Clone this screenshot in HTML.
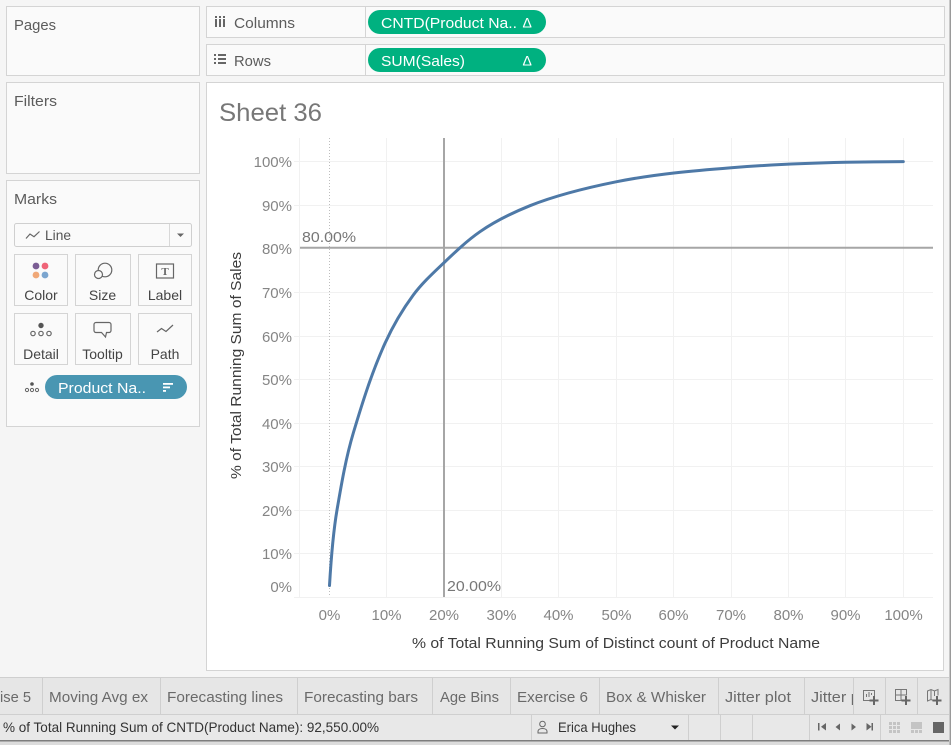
<!DOCTYPE html>
<html lang="en">
<head>
<meta charset="utf-8">
<title>Sheet 36</title>
<style>
html,body{margin:0;padding:0;background:#f5f5f5;width:951px;height:745px;overflow:hidden}
svg{display:block;position:absolute;left:0;top:0}
text{font-family:"Liberation Sans",sans-serif}
.p{fill:#fafafa;stroke:#d4d4d4;stroke-width:1}
.h{font-size:15px;fill:#5c5c5c}
.c{font-size:14px;fill:#444;text-anchor:middle}
.w{font-size:15px;fill:#fff}
.g{stroke:#f1f1f1;stroke-width:1;fill:none}
.y{font-size:15px;fill:#858585;text-anchor:end}
.x{font-size:15px;fill:#858585;text-anchor:middle}
.t{font-size:15px;fill:#6a6a6a}
.s{stroke:#cfcfcf;stroke-width:1}
.i{fill:none;stroke:#666;stroke-width:1.2}
</style>
</head>
<body>
<svg width="951" height="745" viewBox="0 0 951 745" xmlns="http://www.w3.org/2000/svg">
<defs><clipPath id="jc"><rect x="805" y="680" width="48" height="32"/></clipPath></defs>
<rect width="951" height="745" fill="#f5f5f5"/>

<!-- left panels -->
<rect class="p" x="6.5" y="6.5" width="193" height="69"/>
<text class="h" x="14" y="30" textLength="42" lengthAdjust="spacingAndGlyphs">Pages</text>
<rect class="p" x="6.5" y="82.5" width="193" height="91"/>
<text class="h" x="14" y="106" textLength="43" lengthAdjust="spacingAndGlyphs">Filters</text>
<rect class="p" x="6.5" y="180.5" width="193" height="246"/>
<text class="h" x="14" y="204" textLength="43" lengthAdjust="spacingAndGlyphs">Marks</text>

<!-- mark type dropdown -->
<rect x="14.5" y="223.5" width="177" height="23" rx="2" fill="#fafafa" stroke="#cfcfcf"/>
<line x1="169.5" y1="224" x2="169.5" y2="246" stroke="#d8d8d8"/>
<polyline class="i" points="26,238.500 30,234 34,236.700 39.500,231.500"/>
<text x="45" y="240" font-size="14" fill="#555" textLength="26" lengthAdjust="spacingAndGlyphs">Line</text>
<path d="M177 233.5h7l-3.5 3.5z" fill="#666"/>

<!-- mark cards -->
<rect x="14.5" y="254.5" width="53" height="51" fill="#fafafa" stroke="#d4d4d4"/>
<rect x="75.5" y="254.5" width="55" height="51" fill="#fafafa" stroke="#d4d4d4"/>
<rect x="138.5" y="254.5" width="53" height="51" fill="#fafafa" stroke="#d4d4d4"/>
<rect x="14.5" y="313.5" width="53" height="51" fill="#fafafa" stroke="#d4d4d4"/>
<rect x="75.5" y="313.5" width="55" height="51" fill="#fafafa" stroke="#d4d4d4"/>
<rect x="138.5" y="313.5" width="53" height="51" fill="#fafafa" stroke="#d4d4d4"/>
<text class="c" x="41" y="300">Color</text>
<text class="c" x="102.5" y="300">Size</text>
<text class="c" x="165" y="300">Label</text>
<text class="c" x="41" y="359">Detail</text>
<text class="c" x="102.5" y="359">Tooltip</text>
<text class="c" x="165" y="359">Path</text>
<circle cx="36" cy="266" r="3.4" fill="#7b5d94"/>
<circle cx="45" cy="266" r="3.4" fill="#ef6478"/>
<circle cx="36" cy="275" r="3.4" fill="#f0a878"/>
<circle cx="45" cy="275" r="3.4" fill="#7ba5cf"/>
<circle class="i" cx="105" cy="270" r="6.8"/>
<circle cx="98.5" cy="274.5" r="4" fill="#fafafa" stroke="#666" stroke-width="1.2"/>
<rect class="i" x="156.5" y="264" width="17" height="14" stroke="#777"/>
<text x="165" y="275" font-size="11" font-weight="bold" text-anchor="middle" fill="#666" style="font-family:'Liberation Serif',serif">T</text>
<circle cx="41" cy="325.5" r="2.7" fill="#555"/>
<circle class="i" cx="33" cy="333.5" r="2.2"/><circle class="i" cx="41" cy="333.5" r="2.2"/><circle class="i" cx="49" cy="333.5" r="2.2"/>
<path class="i" d="M96 322.500h13a2 2 0 0 1 2 2v6a2 2 0 0 1-2 2h-2.500l-1 4.500-4-4.500h-5.500a2 2 0 0 1-2-2v-6a2 2 0 0 1 2-2z"/>
<polyline class="i" points="157,332 161.500,328.500 166,331.500 173,325"/>

<!-- detail pill -->
<circle cx="32" cy="384" r="1.800" fill="#555"/>
<circle cx="27" cy="390" r="1.600" fill="none" stroke="#666"/><circle cx="32" cy="390" r="1.600" fill="none" stroke="#666"/><circle cx="37" cy="390" r="1.600" fill="none" stroke="#666"/>
<rect x="45" y="375" width="142" height="24" rx="12" fill="#4996b2"/>
<text class="w" x="58" y="393" textLength="88" lengthAdjust="spacingAndGlyphs">Product Na..</text>
<rect x="163" y="383" width="10" height="1.800" fill="#fff"/>
<rect x="163" y="386.500" width="7" height="1.800" fill="#fff"/>
<rect x="163" y="390" width="3" height="1.800" fill="#fff"/>

<!-- shelves -->
<rect class="p" x="206.500" y="6.500" width="738" height="31"/>
<line x1="365.500" y1="7" x2="365.500" y2="37" stroke="#d4d4d4"/>
<rect class="p" x="206.500" y="44.500" width="738" height="31"/>
<line x1="365.500" y1="45" x2="365.500" y2="75" stroke="#d4d4d4"/>
<g fill="#666">
<rect x="215" y="19" width="2" height="8"/><rect x="219" y="19" width="2" height="8"/><rect x="223" y="19" width="2" height="8"/>
<rect x="215" y="16" width="2" height="2"/><rect x="219" y="16" width="2" height="2"/><rect x="223" y="16" width="2" height="2"/>
<rect x="214" y="54" width="2" height="2"/><rect x="214" y="58" width="2" height="2"/><rect x="214" y="62" width="2" height="2"/>
<rect x="218" y="54" width="8" height="2"/><rect x="218" y="58" width="8" height="2"/><rect x="218" y="62" width="8" height="2"/>
</g>
<text class="h" x="234" y="28" textLength="61" lengthAdjust="spacingAndGlyphs">Columns</text>
<text class="h" x="234" y="66" textLength="37" lengthAdjust="spacingAndGlyphs">Rows</text>
<rect x="368" y="10" width="178" height="24" rx="12" fill="#00b180"/>
<text class="w" x="381" y="28" textLength="136" lengthAdjust="spacingAndGlyphs">CNTD(Product Na..</text>
<text class="w" x="522.500" y="27.500" style="font-size:14px">Δ</text>
<rect x="368" y="48" width="178" height="24" rx="12" fill="#00b180"/>
<text class="w" x="381" y="66" textLength="84" lengthAdjust="spacingAndGlyphs">SUM(Sales)</text>
<text class="w" x="522.500" y="65.500" style="font-size:14px">Δ</text>

<!-- sheet -->
<rect x="206.500" y="82.500" width="737" height="588" fill="#fff" stroke="#d4d4d4"/>
<text x="219" y="121" font-size="25" fill="#777" textLength="103" lengthAdjust="spacingAndGlyphs">Sheet 36</text>

<!-- grid -->
<g class="g">
<line x1="299.500" y1="138" x2="299.500" y2="597"/>
<line x1="386.500" y1="138" x2="386.500" y2="597"/>
<line x1="501.500" y1="138" x2="501.500" y2="597"/>
<line x1="558.500" y1="138" x2="558.500" y2="597"/>
<line x1="616.500" y1="138" x2="616.500" y2="597"/>
<line x1="673.500" y1="138" x2="673.500" y2="597"/>
<line x1="731.500" y1="138" x2="731.500" y2="597"/>
<line x1="788.500" y1="138" x2="788.500" y2="597"/>
<line x1="845.500" y1="138" x2="845.500" y2="597"/>
<line x1="903.500" y1="138" x2="903.500" y2="597"/>
<line x1="294" y1="161.500" x2="933" y2="161.500"/>
<line x1="294" y1="205.500" x2="933" y2="205.500"/>
<line x1="294" y1="292.500" x2="933" y2="292.500"/>
<line x1="294" y1="336.500" x2="933" y2="336.500"/>
<line x1="294" y1="379.500" x2="933" y2="379.500"/>
<line x1="294" y1="423.500" x2="933" y2="423.500"/>
<line x1="294" y1="466.500" x2="933" y2="466.500"/>
<line x1="294" y1="510.500" x2="933" y2="510.500"/>
<line x1="294" y1="553.500" x2="933" y2="553.500"/>
<line x1="294" y1="597.500" x2="933" y2="597.500"/>
</g>
<line x1="329.500" y1="138" x2="329.500" y2="597" stroke="#bdbdbd" stroke-dasharray="1 2"/>

<!-- reference lines -->
<line x1="444" y1="138" x2="444" y2="597" stroke="#a6a6a6" stroke-width="2"/>
<line x1="300" y1="247.800" x2="933" y2="247.800" stroke="#a6a6a6" stroke-width="2"/>

<!-- curve -->
<path fill="none" stroke="#4e79a7" stroke-width="3" stroke-linecap="round" d="M329.500 585.500C331 560.200 332.750 534.900 337 510C341.400 484.200 345.800 458.100 353.300 433C362.400 402.600 371.900 372.100 385 343.300C392.700 326.300 402.200 310 413.300 295C422.200 283 433.200 273 444 262.700C455.400 251.800 467 240.700 480 231.700C495.400 221 512.600 212.700 530 205.700C557.800 194.600 587.300 187.600 616.700 181.700C654.900 174.100 693.100 170.700 731.300 167.700C769.300 164.700 807.300 163.200 845.300 162.300C864.600 161.900 884 161.700 903.300 161.600"/>

<!-- ref labels -->
<text x="302" y="242" font-size="15" fill="#777" textLength="54" lengthAdjust="spacingAndGlyphs">80.00%</text>
<text x="447" y="591" font-size="15" fill="#777" textLength="54" lengthAdjust="spacingAndGlyphs">20.00%</text>

<!-- y axis -->
<text class="y" x="292" y="167">100%</text>
<text class="y" x="292" y="211">90%</text>
<text class="y" x="292" y="254">80%</text>
<text class="y" x="292" y="298">70%</text>
<text class="y" x="292" y="342">60%</text>
<text class="y" x="292" y="385">50%</text>
<text class="y" x="292" y="429">40%</text>
<text class="y" x="292" y="472">30%</text>
<text class="y" x="292" y="516">20%</text>
<text class="y" x="292" y="559">10%</text>
<text class="y" x="292" y="592">0%</text>
<text transform="translate(241 479) rotate(-90)" font-size="15" fill="#3c3c3c" textLength="227" lengthAdjust="spacingAndGlyphs" x="0" y="0">% of Total Running Sum of Sales</text>

<!-- x axis -->
<text class="x" x="329.500" y="620">0%</text>
<text class="x" x="386.500" y="620">10%</text>
<text class="x" x="444" y="620">20%</text>
<text class="x" x="501.500" y="620">30%</text>
<text class="x" x="558.500" y="620">40%</text>
<text class="x" x="616.500" y="620">50%</text>
<text class="x" x="673.500" y="620">60%</text>
<text class="x" x="731" y="620">70%</text>
<text class="x" x="788.500" y="620">80%</text>
<text class="x" x="845.500" y="620">90%</text>
<text class="x" x="903.500" y="620">100%</text>
<text x="412" y="648" font-size="15" fill="#3c3c3c" textLength="408" lengthAdjust="spacingAndGlyphs">% of Total Running Sum of Distinct count of Product Name</text>

<!-- tab bar -->
<rect x="0" y="677" width="949" height="38" fill="#e6e6e6"/>
<line x1="0" y1="677.500" x2="949" y2="677.500" stroke="#cfcfcf"/>
<line x1="0" y1="714.500" x2="949" y2="714.500" stroke="#cfcfcf"/>
<g class="s">
<line x1="42.500" y1="678" x2="42.500" y2="714"/>
<line x1="160.500" y1="678" x2="160.500" y2="714"/>
<line x1="297.500" y1="678" x2="297.500" y2="714"/>
<line x1="432.500" y1="678" x2="432.500" y2="714"/>
<line x1="510.500" y1="678" x2="510.500" y2="714"/>
<line x1="599.500" y1="678" x2="599.500" y2="714"/>
<line x1="718.500" y1="678" x2="718.500" y2="714"/>
<line x1="804.500" y1="678" x2="804.500" y2="714"/>
<line x1="853.500" y1="678" x2="853.500" y2="714"/>
<line x1="885.500" y1="678" x2="885.500" y2="714"/>
<line x1="917.500" y1="678" x2="917.500" y2="714"/>
</g>
<text class="t" x="0" y="702" textLength="31" lengthAdjust="spacingAndGlyphs">ise 5</text>
<text class="t" x="49" y="702" textLength="99" lengthAdjust="spacingAndGlyphs">Moving Avg ex</text>
<text class="t" x="167" y="702" textLength="116" lengthAdjust="spacingAndGlyphs">Forecasting lines</text>
<text class="t" x="304" y="702" textLength="114" lengthAdjust="spacingAndGlyphs">Forecasting bars</text>
<text class="t" x="440" y="702" textLength="59" lengthAdjust="spacingAndGlyphs">Age Bins</text>
<text class="t" x="517" y="702" textLength="71" lengthAdjust="spacingAndGlyphs">Exercise 6</text>
<text class="t" x="606" y="702" textLength="100" lengthAdjust="spacingAndGlyphs">Box &amp; Whisker</text>
<text class="t" x="725" y="702" textLength="66" lengthAdjust="spacingAndGlyphs">Jitter plot</text>
<g clip-path="url(#jc)"><text class="t" x="811" y="702" textLength="66" lengthAdjust="spacingAndGlyphs">Jitter plot</text></g>

<!-- new sheet icons -->
<g fill="none" stroke="#777" stroke-width="1">
<path d="M874.500 696.500v-6h-11v10h6"/>
<path d="M866.500 697v-3M869 697v-5M871.500 695v-2"/>
<path d="M902 700.500h-6.500v-11h11v6"/>
<path d="M895.500 695h11M901 689.500v11"/>
<path d="M933.500 700.500l-2.500-1-3.500 1.500v-10l3.500-1.500 3.500 1.500 3.500-1.500v6M931 689.500v10M934.500 691v5"/>
</g>
<g fill="#666">
<rect x="869.500" y="699.500" width="9" height="2"/><rect x="873" y="696" width="2" height="9"/>
<rect x="901.500" y="699.500" width="9" height="2"/><rect x="905" y="696" width="2" height="9"/>
<rect x="932.500" y="699.500" width="9" height="2"/><rect x="936" y="696" width="2" height="9"/>
</g>

<!-- status bar -->
<rect x="0" y="715" width="949" height="25" fill="#e8e8e8"/>
<rect x="0" y="740" width="949" height="1.500" fill="#7d7d7d"/>
<rect x="0" y="741.500" width="951" height="3.500" fill="#dcdcdc"/>
<g class="s">
<line x1="531.500" y1="715" x2="531.500" y2="740"/>
<line x1="688.500" y1="715" x2="688.500" y2="740"/>
<line x1="720.500" y1="715" x2="720.500" y2="740"/>
<line x1="752.500" y1="715" x2="752.500" y2="740"/>
<line x1="809.500" y1="715" x2="809.500" y2="740"/>
<line x1="880.500" y1="715" x2="880.500" y2="740"/>
</g>
<text x="3" y="732" font-size="14" fill="#333" textLength="376" lengthAdjust="spacingAndGlyphs">% of Total Running Sum of CNTD(Product Name): 92,550.00%</text>
<circle cx="542.500" cy="724" r="2.800" fill="none" stroke="#666"/>
<path d="M538 733v-1.500c0-2 2-3 4.500-3s4.500 1 4.500 3v1.500z" fill="none" stroke="#666"/>
<text x="558" y="732" font-size="14" fill="#333" textLength="78" lengthAdjust="spacingAndGlyphs">Erica Hughes</text>
<path d="M671 725.500h8l-4 4z" fill="#222"/>
<g fill="#666">
<rect x="818" y="723" width="1.500" height="7.500"/><path d="M826 723v7.500l-5-3.750z"/>
<path d="M840 723.500v7l-4.500-3.500z"/>
<path d="M851.500 723.500v7l4.500-3.500z"/>
<path d="M866.500 723v7.500l5-3.750z"/><rect x="871.500" y="723" width="1.500" height="7.500"/>
</g>
<g fill="#c4c4c4">
<rect x="889" y="722" width="3" height="3"/><rect x="893" y="722" width="3" height="3"/><rect x="897" y="722" width="3" height="3"/>
<rect x="889" y="726" width="3" height="3"/><rect x="893" y="726" width="3" height="3"/><rect x="897" y="726" width="3" height="3"/>
<rect x="889" y="730" width="3" height="3"/><rect x="893" y="730" width="3" height="3"/><rect x="897" y="730" width="3" height="3"/>
<rect x="911" y="722" width="11" height="7"/>
<rect x="911" y="730" width="3" height="3"/><rect x="915" y="730" width="3" height="3"/><rect x="919" y="730" width="3" height="3"/>
</g>
<rect x="933" y="722" width="11" height="11" fill="#666"/>

<!-- window edge -->
<rect x="949.500" y="0" width="1.500" height="745" fill="#9a9a9a"/>
</svg>
</body>
</html>
